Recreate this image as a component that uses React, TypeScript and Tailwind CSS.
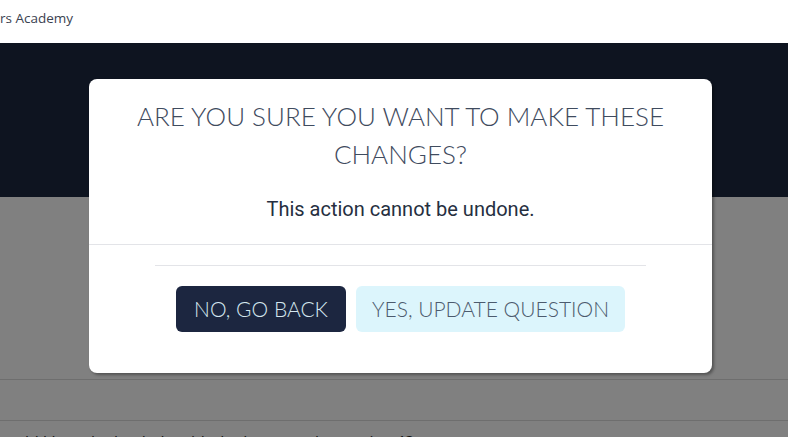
import React from 'react';

const titleFont = { fontFamily: 'Lato, "Open Sans", sans-serif' };

export default function App() {
    return (
        <div className="relative h-[437px] w-[788px] overflow-hidden bg-[#808080] font-['Roboto',sans-serif]">
            {/* Header */}
            <div className="h-[43px] bg-white flex items-center">
                <span className="text-[13.5px] text-[#3b4250] font-['Open_Sans',sans-serif] -mt-[6px]">rs Academy</span>
            </div>

            {/* Dark hero band */}
            <div className="h-[154px] bg-[#0e1420]" />

            {/* Dimmed page content */}
            <div className="h-[182px]" />
            <div className="h-[41px] border-t border-[#6e6e6e]" />
            <div className="border-t border-[#6e6e6e] pt-[9px]">
                <p className="text-[16px] text-[#111] font-['Open_Sans',sans-serif] whitespace-nowrap -ml-[12px]">
                    should I be asked to help with the homework question 1?
                </p>
            </div>

            {/* Modal */}
            <div className="absolute left-[89px] top-[79px] w-[623px] h-[294px] bg-white rounded-lg shadow-[2px_2px_3px_rgba(0,0,0,0.35)] flex flex-col">
                <div className="pt-[18px] pb-[21px] border-b border-[#e3e4e8] text-center">
                    <h2 className="text-[26px] leading-[38px] font-light text-[#3f4b5e] uppercase px-8" style={titleFont}>
                        Are you sure you want to make these changes?
                    </h2>
                    <p className="mt-[22px] text-[20px] leading-[28px] text-[#262f3f]">This action cannot be undone.</p>
                </div>
                <div className="pt-5">
                    <div className="mx-[66px] border-t border-[#e3e4e8]" />
                    <div className="mt-5 flex justify-center gap-[10px]">
                        <button className="w-[170px] h-[46px] rounded-md bg-[#1c2640] text-[#d4e6ef] text-[21px] font-light uppercase" style={titleFont}>
                            No, go back
                        </button>
                        <button className="w-[269px] h-[46px] rounded-md bg-[#dcf5fc] text-[#4c5b6e] text-[21px] font-light uppercase" style={titleFont}>
                            Yes, update question
                        </button>
                    </div>
                </div>
            </div>
        </div>
    );
}
